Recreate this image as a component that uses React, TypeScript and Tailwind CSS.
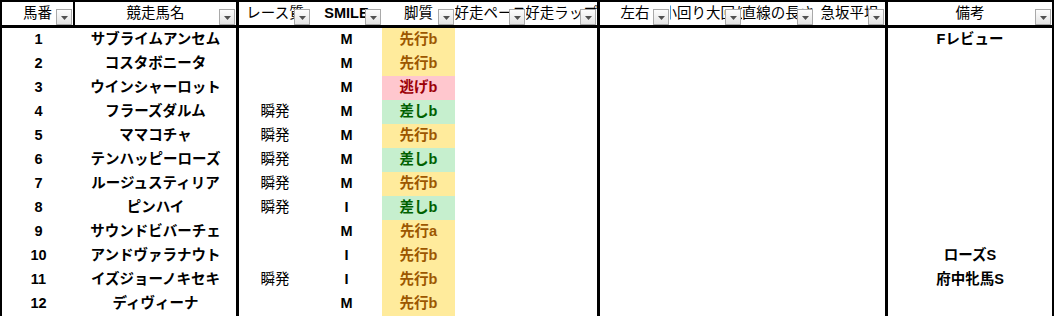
import React from "react";

type Row = {
  no: string;
  name: string;
  race: string;
  smile: string;
  style: string;
  note: string;
};

const rows: Row[] = [
  { no: "1", name: "サブライムアンセム", race: "", smile: "M", style: "先行b", note: "Fレビュー" },
  { no: "2", name: "コスタボニータ", race: "", smile: "M", style: "先行b", note: "" },
  { no: "3", name: "ウインシャーロット", race: "", smile: "M", style: "逃げb", note: "" },
  { no: "4", name: "フラーズダルム", race: "瞬発", smile: "M", style: "差しb", note: "" },
  { no: "5", name: "ママコチャ", race: "瞬発", smile: "M", style: "先行b", note: "" },
  { no: "6", name: "テンハッピーローズ", race: "瞬発", smile: "M", style: "差しb", note: "" },
  { no: "7", name: "ルージュスティリア", race: "瞬発", smile: "M", style: "先行b", note: "" },
  { no: "8", name: "ピンハイ", race: "瞬発", smile: "I", style: "差しb", note: "" },
  { no: "9", name: "サウンドビバーチェ", race: "", smile: "M", style: "先行a", note: "" },
  { no: "10", name: "アンドヴァラナウト", race: "", smile: "I", style: "先行b", note: "ローズS" },
  { no: "11", name: "イズジョーノキセキ", race: "瞬発", smile: "I", style: "先行b", note: "府中牝馬S" },
  { no: "12", name: "ディヴィーナ", race: "", smile: "M", style: "先行b", note: "" },
];

const headers: { t: string; cls: string; bold?: boolean }[] = [
  { t: "馬番", cls: "border-r-2" },
  { t: "競走馬名", cls: "border-r-[3px]" },
  { t: "レース質", cls: "" },
  { t: "SMILE", cls: "", bold: true },
  { t: "脚質", cls: "" },
  { t: "好走ペース", cls: "" },
  { t: "好走ラップ", cls: "border-r-[3px]" },
  { t: "左右", cls: "" },
  { t: "小回り大回り", cls: "" },
  { t: "直線の長さ", cls: "" },
  { t: "急坂平坦", cls: "border-r-[3px]" },
  { t: "備考", cls: "" },
];

function FilterButton() {
  return (
    <div className="absolute bottom-0 right-[1px] w-4 h-4 border border-[#a9a9a9] bg-gradient-to-b from-[#fdfdfd] to-[#e4e4e4] flex items-center justify-center">
      <svg width="7" height="4" viewBox="0 0 7 4" className="mt-[1px]">
        <polygon points="0,0 7,0 3.5,4" fill="#505050" />
      </svg>
    </div>
  );
}

function styleCls(s: string) {
  if (s.startsWith("逃")) return "bg-[#FFC7CE] text-[#9C0006]";
  if (s.startsWith("差")) return "bg-[#C6EFCE] text-[#006100]";
  return "bg-[#FFEB9C] text-[#9C5700]";
}

export default function App() {
  const cell = "h-6 flex items-center justify-center whitespace-nowrap overflow-hidden";
  return (
    <div
      className="w-[1054px] h-[316px] overflow-hidden bg-white text-black text-[14.5px]"
      style={{ fontFamily: '"Liberation Sans", "Noto Sans CJK JP", sans-serif' }}
    >
      <div className="border-t-2 border-l-2 border-r-2 border-black grid grid-cols-[73px_164px_72px_71px_73px_71px_74px_70px_72px_72px_74px_164px]">
        {headers.map((h, i) => (
          <div
            key={i}
            className={`relative h-[26px] border-b-[3px] border-black bg-white overflow-hidden flex items-center justify-center ${h.cls}`}
          >
            <span className={`whitespace-nowrap shrink-0 ${h.bold ? "font-bold" : "font-normal"}`}>{h.t}</span>
            <FilterButton />
          </div>
        ))}
        {rows.map((r, i) => (
          <React.Fragment key={i}>
            <div className={`${cell} font-bold`}>{r.no}</div>
            <div className={`${cell} font-bold border-r-[3px] border-black`}>{r.name}</div>
            <div className={`${cell} font-normal`}>{r.race}</div>
            <div className={`${cell} font-bold`}>{r.smile}</div>
            <div className={`${cell} font-bold ${styleCls(r.style)}`}>{r.style}</div>
            <div className={cell}></div>
            <div className={`${cell} border-r-[3px] border-black`}></div>
            <div className={cell}></div>
            <div className={cell}></div>
            <div className={cell}></div>
            <div className={`${cell} border-r-[3px] border-black`}></div>
            <div className={`${cell} font-bold`}>{r.note}</div>
          </React.Fragment>
        ))}
      </div>
    </div>
  );
}
